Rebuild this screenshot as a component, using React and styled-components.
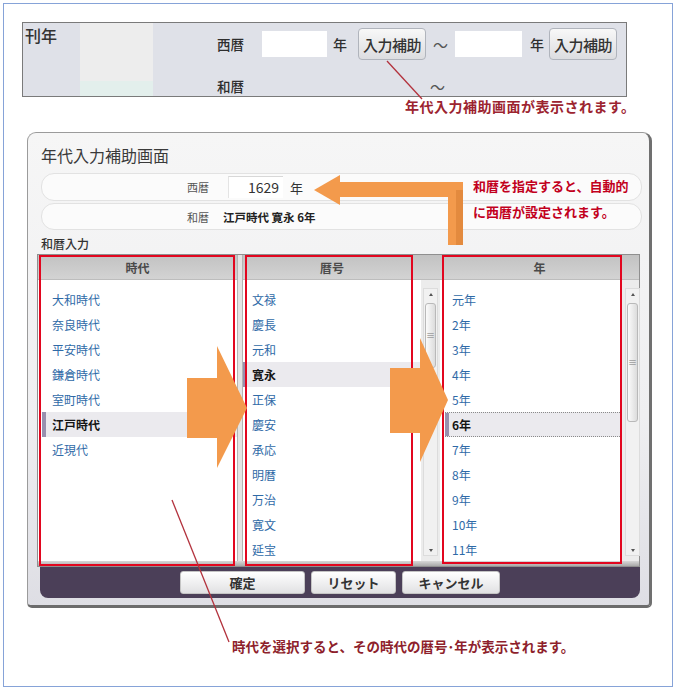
import React from 'react'
import styled, { createGlobalStyle } from 'styled-components'

const GlobalStyle = createGlobalStyle`
  html, body {
    margin: 0;
    padding: 0;
    background: #fff;
  }
  body {
    font-family: "Noto Sans CJK JP", "Noto Sans", "Liberation Sans", sans-serif;
    color: #333;
  }
`

const Page = styled.div`
  width: 676px;
  height: 689px;
  padding: 3px 0 0 3px;
  box-sizing: border-box;
`

const Frame = styled.div`
  position: relative;
  width: 670px;
  height: 684px;
  box-sizing: border-box;
  border: 1px solid #86a3d8;
  padding: 18px 0 0 18px;
`

// ---- top search panel ----

const TopPanel = styled.div`
  display: flex;
  width: 605px;
  height: 75px;
  box-sizing: border-box;
  border: 1px solid #7a7a7a;
  background: #dfe1e8;
`

const LabelCell = styled.div`
  width: 57px;
  padding: 2px 0 0 2px;
  box-sizing: border-box;
  font-size: 16px;
  line-height: 20px;
  font-weight: 500;
  color: #333;
`

const LightCol = styled.div`
  width: 73px;
  background: linear-gradient(to bottom, #ededed 0, #ededed 80%, #e3efec 80%);
`

const Fields = styled.div`
  display: grid;
  grid-template-columns: 45px 71px 25px 75px 22px 75px 19px 70px;
  grid-template-rows: 32px 20px;
  row-gap: 16px;
  align-items: center;
  padding: 5px 0 0 64px;
  font-size: 13.5px;
  font-weight: 500;
  color: #2e2e2e;
`

const YearInput = styled.div`
  width: ${(p) => p.$w}px;
  height: 26px;
  background: #fff;
`

const Unit = styled.span`
  font-size: 14px;
`

const Tilde = styled.span`
  font-size: 15px;
  font-weight: 400;
  color: #555;
  margin-left: ${(p) => p.$shift || 0}px;
`

const HelpButton = styled.div`
  width: 68px;
  height: 32px;
  box-sizing: border-box;
  border: 1px solid #b0b4bc;
  border-radius: 4px;
  background: linear-gradient(#f8f8f8, #dcdde0);
  display: flex;
  align-items: center;
  justify-content: center;
  font-size: 15px;
  font-weight: 500;
  letter-spacing: -0.5px;
  color: #333;
`

// ---- dialog ----

const Dialog = styled.div`
  display: flex;
  flex-direction: column;
  width: 625px;
  height: 476px;
  margin: 35px 0 0 5px;
  box-sizing: border-box;
  border: 1px solid #9b9b9b;
  border-right: 3px solid #707070;
  border-bottom: 3px solid #6c6c6c;
  border-radius: 9px 9px 5px 5px;
  background: linear-gradient(#f6f6f6, #efeff1 60%, #dedee4);
  padding: 12px 7px 0 9px;
`

const Title = styled.div`
  margin: 0 0 8px 4px;
  font-size: 16px;
  line-height: 20px;
  color: #3a3a3a;
`

const InfoBox = styled.div`
  display: flex;
  align-items: center;
  width: 601px;
  height: ${(p) => p.$h}px;
  margin: ${(p) => p.$top || 0}px 0 0 4px;
  box-sizing: border-box;
  border: 1px solid #e2e2e2;
  border-radius: 13px;
  background: #fbfbfb;
  padding-left: 145px;
`

const InfoLabel = styled.span`
  width: ${(p) => p.$w}px;
  font-size: 11px;
  color: #555;
`

const SeirekiBox = styled.div`
  width: 55px;
  height: 22px;
  box-sizing: border-box;
  padding-right: 4px;
  background: #fff;
  border-top: 1px solid #d8d8d8;
  border-left: 1px solid #e4e4e4;
  text-align: right;
  font-size: 14px;
  line-height: 21px;
  color: #333;
`

const InfoUnit = styled.span`
  margin-left: 7px;
  font-size: 13px;
  color: #333;
`

const WarekiValue = styled.span`
  font-size: 11.5px;
  font-weight: bold;
  color: #222;
  white-space: pre;
`

const SectionLabel = styled.div`
  margin: 6px 0 0 4px;
  font-size: 12px;
  line-height: 16px;
  font-weight: 500;
  color: #333;
`

const Table = styled.div`
  position: relative;
  display: flex;
  flex-direction: column;
  width: 603px;
  margin-top: 2px;
  box-sizing: border-box;
  border: 1px solid #8f8f8f;
  background: #fff;
`

const Columns = styled.div`
  display: flex;
  height: 306px;
`

const Column = styled.div`
  display: flex;
  flex-direction: column;
  width: ${(p) => p.$w}px;
`

const Divider = styled.div`
  width: 6px;
  background: linear-gradient(to right, #b4b4b4 1px, #e4e4e4 1px, #e4e4e4 5px, #b4b4b4 5px);
`

const Head = styled.div`
  height: 25px;
  box-sizing: border-box;
  padding-right: ${(p) => p.$padRight || 0}px;
  display: flex;
  align-items: center;
  justify-content: center;
  background: linear-gradient(#c2c2c2, #d3d3d3);
  border-bottom: 1px solid #bdbdbd;
  font-size: 12px;
  font-weight: bold;
  color: #4a4a4a;
`

const Body = styled.div`
  display: flex;
  height: 281px;
  background: #ececec;
`

const List = styled.div`
  flex: 1;
  background: #fff;
  padding: 7px 0 0 ${(p) => p.$pad || 0}px;
  overflow: hidden;
`

const Item = styled.div`
  height: 25px;
  box-sizing: border-box;
  display: flex;
  align-items: center;
  padding-left: ${(p) => p.$indent}px;
  font-size: 12px;
  color: #2f6aa7;
  ${(p) =>
    p.$selected &&
    `
    background: #ebeaee;
    color: #151515;
    font-weight: bold;
    box-shadow: inset 4px 0 0 #9890ae;
  `}
  ${(p) =>
    p.$selected &&
    p.$focus &&
    `
    border-top: 1px dotted #8a8a8a;
    border-bottom: 1px dotted #8a8a8a;
  `}
`

const Scroll = styled.div`
  width: ${(p) => p.$w}px;
  box-sizing: border-box;
  padding: 8px ${(p) => p.$right}px 5px ${(p) => p.$left}px;
  display: flex;
`

const Track = styled.div`
  flex: 1;
  display: flex;
  flex-direction: column;
  background: #f1f1f1;
  border: 1px solid #dcdcdc;
`

const Arrow = styled.div`
  height: 10px;
  display: flex;
  align-items: center;
  justify-content: center;
  &::after {
    content: '';
    border-left: 2.5px solid transparent;
    border-right: 2.5px solid transparent;
    ${(p) => (p.$down ? 'border-top: 3px solid #555;' : 'border-bottom: 3px solid #555;')}
  }
`

const Thumb = styled.div`
  height: ${(p) => p.$h}px;
  margin: 4px 1px 0;
  box-sizing: border-box;
  border: 1px solid #b9b9b9;
  border-radius: 3px;
  background: linear-gradient(to right, #fbfbfb, #dcdcdc);
  display: flex;
  align-items: center;
  justify-content: center;
  font-size: 9px;
  line-height: 9px;
  color: #777;
`

const Spacer = styled.div`
  flex: 1;
`

const Strip = styled.div`
  height: 5px;
  background: linear-gradient(#d8d8d8, #a9a9a9);
`

const RedBox = styled.div`
  position: absolute;
  left: ${(p) => p.$x}px;
  top: ${(p) => p.$y}px;
  width: ${(p) => p.$w}px;
  height: ${(p) => p.$h}px;
  box-sizing: border-box;
  border: 2px solid #e2061f;
  pointer-events: none;
`

const Footer = styled.div`
  display: flex;
  align-items: center;
  gap: 6px;
  width: 600px;
  height: 31px;
  margin-left: 3px;
  box-sizing: border-box;
  padding-left: 140px;
  background: #4b3f58;
  border-radius: 0 0 8px 8px;
`

const FooterButton = styled.div`
  width: ${(p) => p.$w}px;
  height: 23px;
  box-sizing: border-box;
  border: 1px solid #c4c4c4;
  border-radius: 3px;
  background: linear-gradient(#ffffff, #e1e1e3);
  display: flex;
  align-items: center;
  justify-content: center;
  font-size: 13px;
  font-weight: bold;
  color: #333;
`

// ---- annotations ----

const Overlay = styled.svg`
  position: absolute;
  left: -4px;
  top: -4px;
  pointer-events: none;
`

const Note = styled.div`
  position: absolute;
  left: ${(p) => p.$x - 4}px;
  top: ${(p) => p.$y - 4}px;
  font-size: ${(p) => p.$size}px;
  line-height: ${(p) => p.$lh}px;
  letter-spacing: ${(p) => p.$ls || 0}px;
  font-weight: bold;
  color: ${(p) => p.$color};
  white-space: nowrap;
`

const eras = ['大和時代', '奈良時代', '平安時代', '鎌倉時代', '室町時代', '江戸時代', '近現代']
const gengo = ['文禄', '慶長', '元和', '寛永', '正保', '慶安', '承応', '明暦', '万治', '寛文', '延宝']
const years = ['元年', '2年', '3年', '4年', '5年', '6年', '7年', '8年', '9年', '10年', '11年']

const ScrollBar = ({ w, left, right, thumb }) => (
  <Scroll $w={w} $left={left} $right={right}>
    <Track>
      <Arrow />
      <Thumb $h={thumb}>≡</Thumb>
      <Spacer />
      <Arrow $down />
    </Track>
  </Scroll>
)

const App = () => {
  return (
    <Page>
      <GlobalStyle />
      <Frame>
        <TopPanel>
          <LabelCell>刊年</LabelCell>
          <LightCol />
          <Fields>
            <span>西暦</span>
            <YearInput $w={65} />
            <Unit>年</Unit>
            <HelpButton>入力補助</HelpButton>
            <Tilde>～</Tilde>
            <YearInput $w={67} />
            <Unit>年</Unit>
            <HelpButton>入力補助</HelpButton>
            <span>和暦</span>
            <span />
            <span />
            <span />
            <Tilde $shift={-3}>～</Tilde>
          </Fields>
        </TopPanel>

        <Dialog>
          <Title>年代入力補助画面</Title>
          <InfoBox $h={28}>
            <InfoLabel $w={41}>西暦</InfoLabel>
            <SeirekiBox>1629</SeirekiBox>
            <InfoUnit>年</InfoUnit>
          </InfoBox>
          <InfoBox $h={27} $top={2}>
            <InfoLabel $w={36}>和暦</InfoLabel>
            <WarekiValue>江戸時代 寛永 6年</WarekiValue>
          </InfoBox>
          <SectionLabel>和暦入力</SectionLabel>

          <Table>
            <Columns>
              <Column $w={199}>
                <Head>時代</Head>
                <Body>
                  <List $pad={4}>
                    {eras.map((e) => (
                      <Item key={e} $indent={10} $selected={e === '江戸時代'}>
                        {e}
                      </Item>
                    ))}
                  </List>
                </Body>
              </Column>
              <Divider />
              <Column $w={197}>
                <Head $padRight={19}>暦号</Head>
                <Body>
                  <List>
                    {gengo.map((g) => (
                      <Item key={g} $indent={9} $selected={g === '寛永'}>
                        {g}
                      </Item>
                    ))}
                  </List>
                  <ScrollBar w={19} left={2} right={2} thumb={65} />
                </Body>
              </Column>
              <Column $w={199}>
                <Head>年</Head>
                <Body>
                  <List $pad={5}>
                    {years.map((y) => (
                      <Item key={y} $indent={7} $selected={y === '6年'} $focus>
                        {y}
                      </Item>
                    ))}
                  </List>
                  <ScrollBar w={17} left={3} right={2} thumb={119} />
                </Body>
              </Column>
            </Columns>
            <Strip />
            <RedBox $x={1} $y={0} $w={196} $h={311} />
            <RedBox $x={207} $y={0} $w={168} $h={311} />
            <RedBox $x={404} $y={0} $w={180} $h={309} />
          </Table>

          <Footer>
            <FooterButton $w={125}>確定</FooterButton>
            <FooterButton $w={85}>リセット</FooterButton>
            <FooterButton $w={98}>キャンセル</FooterButton>
          </Footer>
        </Dialog>

        <Overlay width="676" height="689" viewBox="0 0 676 689">
          <line x1="387" y1="61" x2="422" y2="99" stroke="#b3323d" strokeWidth="1.3" />
          <line x1="172" y1="500" x2="229" y2="642" stroke="#b3323d" strokeWidth="1.3" />
          {/* L-shaped arrow to 西暦 */}
          <rect x="338" y="182" width="125" height="15" fill="#f39a4c" />
          <rect x="448" y="182" width="15" height="63" fill="#f39a4c" />
          <rect x="456" y="190" width="7" height="55" fill="#e38a3e" />
          <polygon points="314,190 340,175 340,205" fill="#f39a4c" />
          {/* block arrows in the table */}
          <polygon points="187,378 217,378 217,346 247,408 217,468 217,438 187,438" fill="#f39a4c" />
          <polygon points="390,368 420,368 420,338 448,400 420,462 420,433 390,433" fill="#f39a4c" />
        </Overlay>

        <Note $x={405} $y={98} $size={14} $lh={16} $ls={0.5} $color="#9c2430">
          年代入力補助画面が表示されます。
        </Note>
        <Note $x={473} $y={173} $size={13} $lh={26} $color="#c2001d">
          和暦を指定すると、自動的
          <br />
          に西暦が設定されます。
        </Note>
        <Note $x={232} $y={637} $size={13.5} $lh={18} $color="#8e1f2c">
          時代を選択すると、その時代の暦号･年が表示されます。
        </Note>
      </Frame>
    </Page>
  )
}

export default App
